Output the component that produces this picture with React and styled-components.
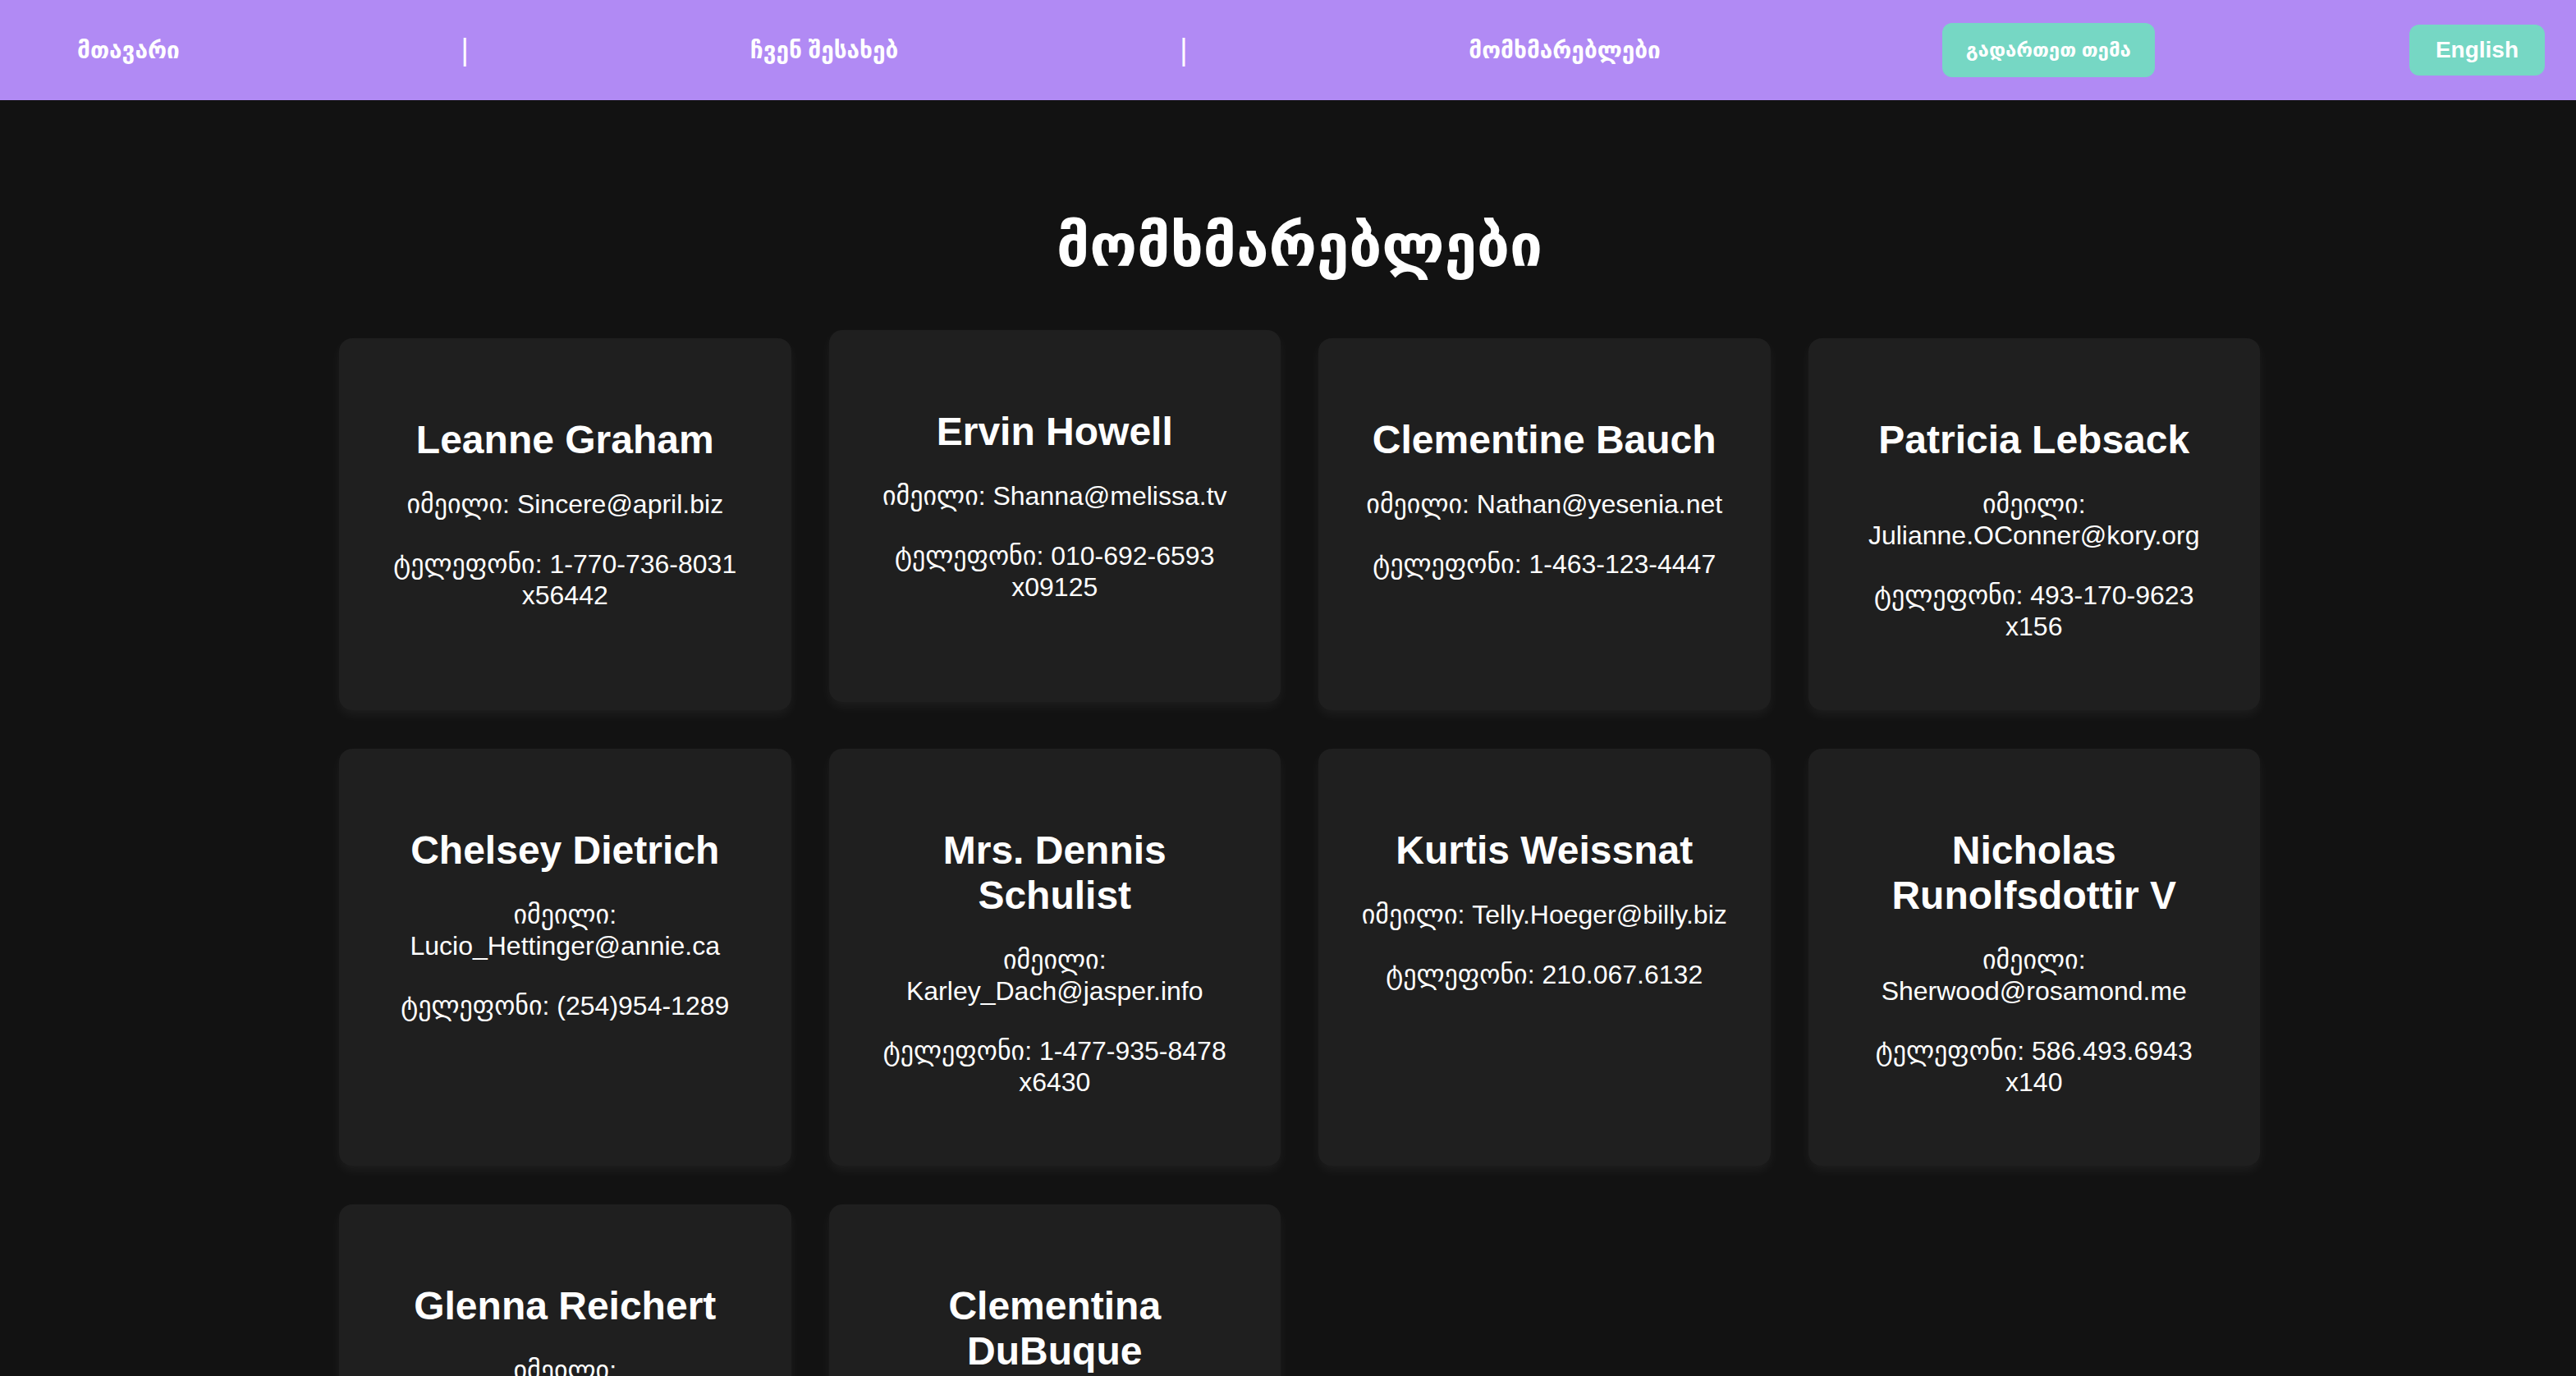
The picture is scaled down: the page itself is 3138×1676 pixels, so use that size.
import React from 'react';
import styled, { createGlobalStyle } from 'styled-components';

const GlobalStyle = createGlobalStyle`
  body {
    margin: 0;
    background: #121212;
    color: #ffffff;
    font-family: "Liberation Sans", "DejaVu Sans", Arial, sans-serif;
  }
`

const Nav = styled.nav`
  display: flex;
  align-items: center;
  height: 122px;
  padding: 0 38px 0 94px;
  background: #b18af4;
`

const NavGroup = styled.div`
  flex: 1;
  display: flex;
  align-items: center;
  justify-content: space-between;
`

const NavLink = styled.a`
  color: #ffffff;
  font-size: 28px;
  font-weight: bold;
  text-decoration: none;
  cursor: pointer;
`

const Divider = styled.span`
  color: #ffffff;
  font-size: 36px;
  font-weight: normal;
`

const Button = styled.button`
  height: ${p => p.tall ? '66px' : '62px'};
  padding: 0 ${p => p.tall ? '29px' : '32px'};
  margin-left: ${p => p.offset || 0}px;
  border: none;
  border-radius: 12px;
  background: #76d7c4;
  color: #ffffff;
  font-family: inherit;
  font-size: ${p => p.tall ? '24px' : '28px'};
  font-weight: bold;
  cursor: pointer;
`

const Main = styled.main`
  padding: 136px 0 80px 28px;
`

const Title = styled.h1`
  margin: 0;
  text-align: center;
  font-size: 71px;
  line-height: 84px;
  font-weight: bold;
`

const Grid = styled.div`
  width: 2340px;
  margin: 70px auto 0;
  display: grid;
  grid-template-columns: repeat(4, 1fr);
  gap: 47px 46px;
`

const Card = styled.div`
  padding: 46px 50px 48px;
  background: #1f1f1f;
  border-radius: 16px;
  text-align: center;
  box-shadow: 0 6px 14px rgba(255, 255, 255, 0.05);
  transform: ${p => p.raised ? 'translateY(-10px)' : 'none'};
`

const Name = styled.h2`
  margin: 50px 0 32px;
  font-size: 48px;
  font-weight: bold;
`

const Info = styled.p`
  margin: 0 0 35px;
  font-size: 32px;
  line-height: 38px;
`

const users = [
  { name: 'Leanne Graham', email: 'Sincere@april.biz', phone: '1-770-736-8031 x56442' },
  { name: 'Ervin Howell', email: 'Shanna@melissa.tv', phone: '010-692-6593 x09125' },
  { name: 'Clementine Bauch', email: 'Nathan@yesenia.net', phone: '1-463-123-4447' },
  { name: 'Patricia Lebsack', email: 'Julianne.OConner@kory.org', phone: '493-170-9623 x156' },
  { name: 'Chelsey Dietrich', email: 'Lucio_Hettinger@annie.ca', phone: '(254)954-1289' },
  { name: 'Mrs. Dennis Schulist', email: 'Karley_Dach@jasper.info', phone: '1-477-935-8478 x6430' },
  { name: 'Kurtis Weissnat', email: 'Telly.Hoeger@billy.biz', phone: '210.067.6132' },
  { name: 'Nicholas Runolfsdottir V', email: 'Sherwood@rosamond.me', phone: '586.493.6943 x140' },
  { name: 'Glenna Reichert', email: 'Chaim_McDermott@dana.io', phone: '(775)976-6794 x41206' },
  { name: 'Clementina DuBuque', email: 'Rey.Padberg@karina.biz', phone: '024-648-3804' },
]

export default function App() {
  return (
    <>
      <GlobalStyle />
      <Nav>
        <NavGroup>
          <NavLink>მთავარი</NavLink>
          <Divider>|</Divider>
          <NavLink>ჩვენ შესახებ</NavLink>
          <Divider>|</Divider>
          <NavLink>მომხმარებლები</NavLink>
          <Button tall>გადართეთ თემა</Button>
        </NavGroup>
        <Button offset={310}>English</Button>
      </Nav>
      <Main>
        <Title>მომხმარებლები</Title>
        <Grid>
          {users.map((u, i) => (
            <Card key={u.name} raised={i === 1}>
              <Name>{u.name}</Name>
              <Info>იმეილი: {u.email}</Info>
              <Info>ტელეფონი: {u.phone}</Info>
            </Card>
          ))}
        </Grid>
      </Main>
    </>
  )
}
